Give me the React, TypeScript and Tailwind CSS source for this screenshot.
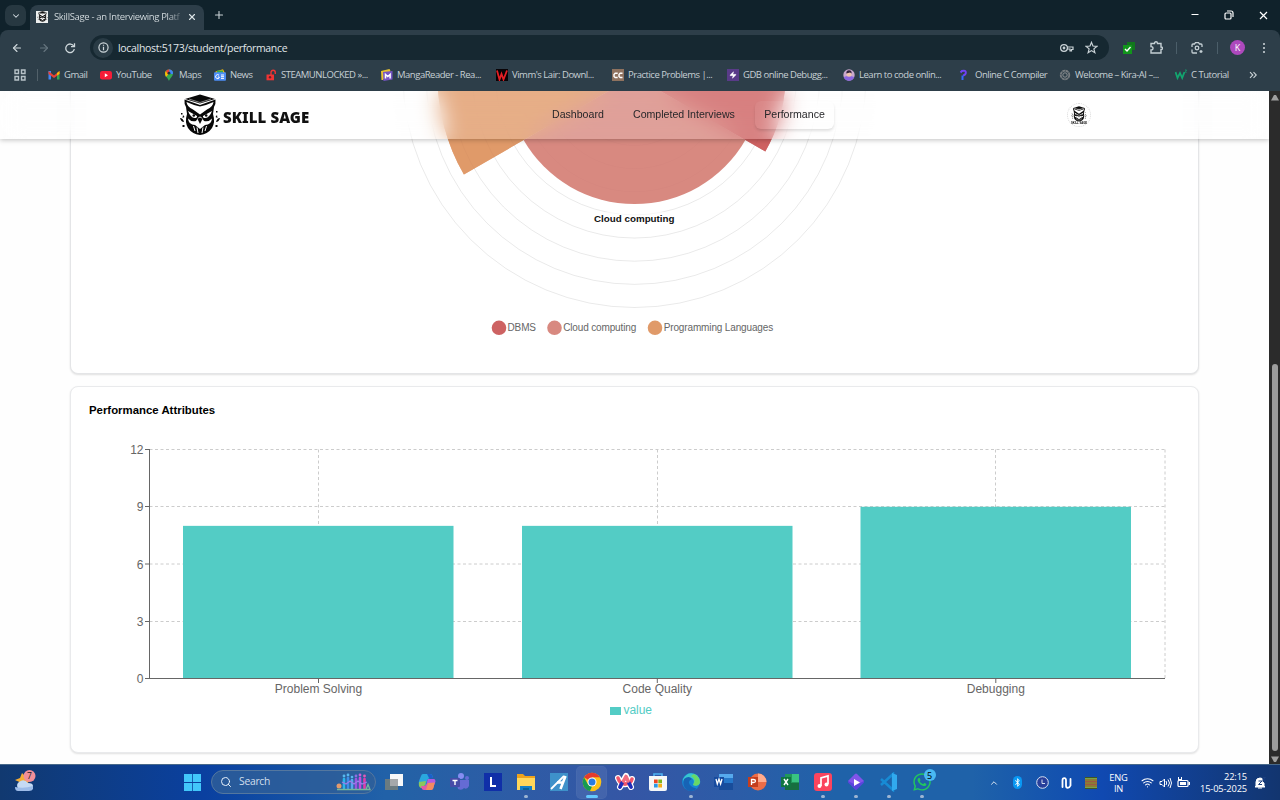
import React from "react";
import { FaWhatsapp, FaBluetoothB } from "react-icons/fa";
import { ArrowLeft, ArrowRight, ChevronDown, ChevronUp, X, Plus, Search, Wifi, Zap } from "lucide-react";

const Owl = ({ className }: { className: string }) => (
  <svg viewBox="0 0 40 42" className={className} fill="#080808">
    <path d="M5 5 20 .5 35 5 20 9.5Z" />
    <path d="M4.500 5.500 Q4 10 6 13 L7 20 Q4.500 28 8 34 Q12 40 20 41 Q28 40 32 34 Q35.500 28 33 20 L34 13 Q36 10 35.500 5.500 L20 11Z" />
    <path d="M6.500 8 Q13 11 20 12.500 Q27 11 33.500 8 Q33 13 27 15.500 L20 20.500 13 15.500 Q7 13 6.500 8Z" fill="#fff" />
    <path d="M8 17 17 22 Q17.500 24 14.500 24 Q10.500 23.500 8 17Z M32 17 23 22 Q22.500 24 25.500 24 Q29.500 23.500 32 17Z" fill="#fff" />
    <circle cx="13.800" cy="21.500" r="1.300" />
    <circle cx="26.200" cy="21.500" r="1.300" />
    <path d="M8 24.500 Q11 28 16 27 L18 24 Q20 21 22 24 L24 27 Q29 28 32 24.500 Q31.500 31 25 31 L20 35 15 31 Q8.500 31 8 24.500Z" fill="#fff" />
    <path d="M17.500 25 Q20 22 22.500 25 L20 30Z" />
    <path d="M13.500 32 15 37 M17 33.500 18 39 M23 33.500 22 39 M26.500 32 25 37" stroke="#fff" strokeWidth="1" />
    <path d="M9 5 20 8.500 31 5" stroke="#fff" strokeWidth=".5" fill="none" />
    <path d="M1 19h1.500v1.500H1z M0 24q3 0 4 4q-3 0-4-4z M2.500 31h2v2h-2z M3 21l1.500 2-2 1z M36 17h1.500v1.500H36z M40 24q-3 0-4 4q3 0 4-4z M35.500 31h2v2h-2z M37 21l-1.500 2 2 1z" />
  </svg>
);

const bookmarkText = "whitespace-nowrap text-[9.500px] leading-3 tracking-[-0.48px] text-[#c7d0d5]";
const slot = "flex shrink-0 items-center gap-1";
const fav = "size-3 shrink-0";

const Bookmarks = () => (
  <div className="flex h-[29px] items-center overflow-hidden pl-[14px]">
    <svg viewBox="0 0 12 12" className="mr-[16px] size-3 shrink-0" fill="none" stroke="#b7c2c8" strokeWidth="1.400">
      <path d="M1 1h3.500v3.500H1zM7.500 1H11v3.500H7.500zM1 7.500h3.500V11H1zM7.500 7.500H11V11H7.500z" />
    </svg>
    <div className="-ml-[5px] mr-[10px] h-3 w-px shrink-0 bg-[#52616a]" />
    <div className={`${slot} w-[52px]`}>
      <svg viewBox="0 0 12 12" className={fav}><path d="M.5 2h2.500v8.500H.5z" fill="#4285f4" /><path d="M9 4h2.500v6.500H9z" fill="#34a853" /><path d="M.5 2 6 6.500 11.500 2v3L6 9 .5 5z" fill="#ea4335" /><path d="M9 4l2.500-2v3L9 6.500z" fill="#fbbc04" /></svg>
      <span className={bookmarkText}>Gmail</span>
    </div>
    <div className={`${slot} w-[63px]`}>
      <svg viewBox="0 0 12 12" className={fav}><rect y="2" width="12" height="8.500" rx="2.200" fill="#f61c38" /><path d="M4.800 4.300v4L8 6.300z" fill="#fff" /></svg>
      <span className={bookmarkText}>YouTube</span>
    </div>
    <div className={`${slot} w-[51px]`}>
      <svg viewBox="0 0 12 12" className={fav}><path d="M6 12C5 9 2 7.500 2 4.300 2 2 3.800.4 6 .4s4 1.600 4 3.900C10 7.500 7 9 6 12z" fill="#34a853" /><path d="M2.800 2 6 4.500 3 8C2 6 1.500 4 2.800 2z" fill="#fbbc04" /><path d="M2.700 2.100C4 0 7 0 8.500 1.200L5 5.500z" fill="#ea4335" /><path d="M6 .4c3 0 4.500 2.200 3.900 4.600L7 5z" fill="#4285f4" /><circle cx="6" cy="4.200" r="1.400" fill="#20343d" /></svg>
      <span className={bookmarkText}>Maps</span>
    </div>
    <div className={`${slot} w-[51px]`}>
      <svg viewBox="0 0 12 12" className={fav}><path d="M1.500 2.500 9 .3l2.500 5H1.500z" fill="#fbbc04" /><path d="M3 1.500h6V5H3z" fill="#34a853" /><rect y="3.300" width="12" height="8.500" rx="1" fill="#4c8df6" /><path d="M5 6.200a2 2 0 1 0 .3 2.500V8H3.800M7 6h3M7 7.700h3M7 9.400h3" stroke="#fff" fill="none" /></svg>
      <span className={bookmarkText}>News</span>
    </div>
    <div className={`${slot} w-[116px]`}>
      <svg viewBox="0 0 12 12" className={fav}><path d="M1.500 5.500h7.500v5.800H1.500z" fill="#ef3434" /><path d="M6 6V3.500c0-3 4.300-3 4.300 0V5" fill="none" stroke="#ef3434" strokeWidth="1.400" /><circle cx="5" cy="8.300" r="1.200" fill="#66222a" /></svg>
      <span className={bookmarkText}>STEAMUNLOCKED »...</span>
    </div>
    <div className={`${slot} w-[115px]`}>
      <svg viewBox="0 0 12 12" className={fav}><path d="M0 2 8.500 0l1 2L2 11H.5z" fill="#e8c332" /><path d="M2 3 11.500 2v8.500L2.500 12z" fill="#7654c4" /><path d="M4.500 9.500V5.500l2.300 2 2.300-2V9.500" fill="none" stroke="#fff" strokeWidth="1.500" /></svg>
      <span className={bookmarkText}>MangaReader - Rea...</span>
    </div>
    <div className={`${slot} w-[116px]`}>
      <svg viewBox="0 0 12 12" className={fav}><path d="M0 0h12v12H0z" fill="#090306" /><path d="m1 1.500 2.500 9L5.500 5l2 5.500L11 1.500" fill="none" stroke="#e31e24" strokeWidth="1.800" /></svg>
      <span className={bookmarkText}>Vimm's Lair: Downl...</span>
    </div>
    <div className={`${slot} w-[115px]`}>
      <svg viewBox="0 0 12 12" className={fav}><path d="M0 0h12v12H0z" fill="#8f725f" /><path d="M5.700 4.300H3.200L2 5.500v2l1.200 1h2.500M10.500 4.300H8.200L7 5.500v2l1.200 1h2.300" fill="none" stroke="#fff" strokeWidth="1.400" /></svg>
      <span className={bookmarkText}>Practice Problems |...</span>
    </div>
    <div className={`${slot} w-[116px]`}>
      <span className="flex size-3 shrink-0 items-center justify-center bg-[#593b88]"><Zap size={8} fill="#fff" color="#fff" strokeWidth={1} /></span>
      <span className={bookmarkText}>GDB online Debugg...</span>
    </div>
    <div className={`${slot} w-[116px]`}>
      <svg viewBox="0 0 12 12" className={fav}><circle cx="6" cy="6" r="5.700" fill="#c9a8cc" /><path d="M.8 8q5-2 10.400 0-1 3.700-5.200 3.700T.8 8z" fill="#8a65e0" /><circle cx="6" cy="5.300" r="2.500" fill="#efc2ad" /><path d="M3.300 4.500Q3.300 1.300 6 1.300t2.700 3.200L7 3.500z" fill="#33233c" /></svg>
      <span className={bookmarkText}>Learn to code onlin...</span>
    </div>
    <div className={`${slot} w-[100px]`}>
      <svg viewBox="0 0 12 12" className={fav}><path d="M1.500 3.500 3 2q4-1 3.800 1.800Q6.500 6 4 6.500" fill="none" stroke="#7142f5" strokeWidth="2" /><path d="M2.500 6.500h2V11h-2z" fill="#3469ff" /></svg>
      <span className={bookmarkText}>Online C Compiler</span>
    </div>
    <div className={`${slot} w-[116px]`}>
      <svg viewBox="0 0 12 12" className={fav}><circle cx="6" cy="6" r="4.300" fill="none" stroke="#777c80" strokeWidth="1.800" strokeDasharray="3 .4" /><circle cx="6" cy="6" r="2.200" fill="none" stroke="#8d9194" /></svg>
      <span className={bookmarkText}>Welcome – Kira-AI –...</span>
    </div>
    <div className={`${slot} w-[74px]`}>
      <svg viewBox="0 0 12 12" className={fav}><path d="m.5 3 2 6L5 4l2.200 5L9.500 3" fill="none" stroke="#12a66f" strokeWidth="1.800" /><path d="M10 1h1.500L10.500 3l1 1" fill="none" stroke="#12a66f" strokeWidth=".8" /></svg>
      <span className={bookmarkText}>C Tutorial</span>
    </div>
    <svg viewBox="0 0 8 8" className="size-2 shrink-0" fill="none" stroke="#cbd3d7" strokeWidth="1.100"><path d="m1 1.200 2.800 2.800L1 6.800M4.500 1.200l2.800 2.800-2.800 2.800" /></svg>
  </div>
);

const Browser = () => (
  <div className="h-[91px] shrink-0 bg-[#10222b] font-['Open_Sans','Noto_Sans',sans-serif]">
    <div className="flex h-[30px] items-end">
      <div className="mb-1 ml-[5px] flex size-[21px] items-center justify-center rounded-[7px] bg-[#273841]">
        <ChevronDown size={10} strokeWidth={2.500} color="#d4dde1" />
      </div>
      <div className="ml-[4px] flex h-[25px] w-[174px] items-center rounded-t-[8px] bg-[#2d3e49] pb-[2px] pl-[6px]">
        <div className="flex size-3 items-center justify-center bg-[#eef0ef]"><Owl className="size-[11px]" /></div>
        <div className="ml-[6px] w-[127px] whitespace-nowrap bg-linear-to-r from-[#dce3e6] from-90% to-[#dce3e6]/20 bg-clip-text text-[9.500px] leading-4 tracking-[-0.34px] text-transparent">SkillSage - an Interviewing Platf</div>
        <X size={10} strokeWidth={2.700} color="#dce3e6" className="ml-[6px]" />
      </div>
      <Plus size={12} strokeWidth={2.200} color="#c9d2d6" className="mb-[9px] ml-[9px]" />
      <div className="mb-[10px] ml-auto mr-[12px] flex items-center">
        <svg viewBox="0 0 8 8" className="mr-[25px] size-2"><path d="M.5 3.500h7" stroke="#fff" /></svg>
        <svg viewBox="0 0 10 10" className="mr-[25px] size-[10px]" fill="none" stroke="#fff" strokeWidth="1.200"><rect x="1" y="3" width="6" height="6" rx="1" /><path d="M3 1h4q2 0 2 2v4" /></svg>
        <svg viewBox="0 0 9 9" className="size-[9px]" stroke="#fff" strokeWidth="1.200"><path d="m1 1 7 7M8 1 1 8" /></svg>
      </div>
    </div>
    <div className="h-[61px] rounded-t-[8px] bg-[#2d3e49]">
      <div className="flex h-[30px] items-end">
        <div className="flex h-[25px] w-[90px] items-center pl-[11px]">
          <ArrowLeft size={12} strokeWidth={2.200} color="#cfd8dc" />
          <ArrowRight size={12} strokeWidth={2.200} color="#65757f" className="ml-[15px]" />
          <svg viewBox="0 0 12 12" className="ml-[14px] size-3" fill="none" stroke="#cfd8dc" strokeWidth="1.300"><path d="M9.800 4.200A4.300 4.300 0 1 0 10.300 7" /><path d="M10.500 1.200v3.500H7" /></svg>
        </div>
        <div className="flex h-[25px] w-[1019px] items-center rounded-full bg-[#162831] pl-[3px]">
          <div className="flex size-[20px] items-center justify-center rounded-full bg-[#293b45]">
            <svg viewBox="0 0 12 12" className="size-[11px]" fill="none" stroke="#cfd8dc" strokeWidth="1.300"><circle cx="6" cy="6" r="5" /><path d="M6 5.300V9M6 2.900v1.300" /></svg>
          </div>
          <span className="ml-[5px] text-[10.500px] leading-5 tracking-[-0.31px] text-[#e0e6e9]">localhost:5173/student/performance</span>
          <svg viewBox="0 0 14 10" className="ml-auto h-[10px] w-[14px]" fill="none" stroke="#cbd4d8" strokeWidth="1.200"><circle cx="4" cy="5" r="3.400" /><circle cx="4" cy="5" r=".8" /><path d="M7 4h6v2.500h-1.500v1.300H10V6H7" /></svg>
          <svg viewBox="0 0 24 24" className="ml-[11px] mr-[11px] size-[13px]" fill="none" stroke="#cbd4d8" strokeWidth="2.200"><path d="m12 2.500 2.700 6.800 7.300.5-5.600 4.700 1.800 7.100L12 17.700l-6.200 3.900 1.800-7.100L2 9.800l7.300-.5z" /></svg>
        </div>
        <div className="flex h-[25px] items-center">
          <svg viewBox="0 0 12 12" className="ml-[14px] size-3"><path d="M4 0h8v8H4z" fill="#11771c" /><path d="M0 3h9v9H0z" fill="#12961c" /><path d="m2 7 2 2 3.500-4" fill="none" stroke="#fff" strokeWidth="1.400" /></svg>
          <svg viewBox="0 0 13 13" className="ml-[15px] size-[13px]" fill="none" stroke="#c4cfd4" strokeWidth="1.400"><path d="M1 2.500h3.500Q4.500.8 6 .8t1.500 1.700H11V6q1.500 0 1.500 1.300T11 8.500V12H1V9q2 0 2-1.700T1 5.600z" /></svg>
          <div className="ml-[13px] h-3 w-px bg-[#4b5e69]" />
          <svg viewBox="0 0 12 12" className="ml-[14px] size-3" fill="none" stroke="#c4cfd4" strokeWidth="1.300"><path d="M1 5V3q0-1 1-1h1.500l1-1.300h3L8.500 2H10q1 0 1 1v2M1 7.500V10q0 1 1 1h4M10 8v3M8.500 9.500h3" /><circle cx="6" cy="6" r="1.800" /></svg>
          <div className="ml-[14px] h-3 w-px bg-[#4b5e69]" />
          <div className="ml-[12px] flex size-[15px] items-center justify-center rounded-full bg-[#ad49bd] text-[9px] leading-none text-white">K</div>
          <svg viewBox="0 0 4 12" className="ml-[17px] h-3 w-1" fill="#d2dade"><circle cx="2" cy="2" r="1" /><circle cx="2" cy="6" r="1" /><circle cx="2" cy="10" r="1" /></svg>
        </div>
      </div>
      <Bookmarks />
    </div>
  </div>
);

const rings = [1, 2, 3, 4, 5, 6, 7, 8, 9, 10];

const PolarChart = () => (
  <svg viewBox="71 91 1127 282" className="block h-[282px] w-[1127px]">
    <path d="M634.500 76V-121A197 197 0 0 0 463.900 174.500Z" fill="#e09a69" />
    <path d="M634.500 76V-75A151 151 0 0 1 765.300 151.500Z" fill="#cd6262" />
    <path d="M634.500 76 745.400 140A128 128 0 0 1 523.600 140Z" fill="#d88980" />
    <g fill="none" stroke="#000" strokeOpacity=".11" strokeWidth=".8">
      {rings.slice(5).map((n) => <circle key={n} cx="634.500" cy="76" r={n * 23.15} />)}
    </g>
    <g fill="none" stroke="#000" strokeOpacity=".02" strokeWidth=".8">
      {rings.slice(0, 5).map((n) => <circle key={n} cx="634.500" cy="76" r={n * 23.15} />)}
    </g>
    <path d="M634.500 76V-121A197 197 0 0 0 463.900 174.500Z" fill="#e09a69" fillOpacity=".75" />
    <path d="M634.500 76V-75A151 151 0 0 1 765.300 151.500Z" fill="#cd6262" fillOpacity=".75" />
    <rect x="592" y="212" width="85" height="14" fill="#fff" fillOpacity=".6" />
    <text x="634.300" y="222.300" textAnchor="middle" fontSize="9.800" fontWeight="700" fill="#111">Cloud computing</text>
    <g fontSize="10" fill="#666">
      <circle cx="499" cy="327.800" r="7.300" fill="#cd6262" />
      <text x="507.500" y="331" textLength="28.500">DBMS</text>
      <circle cx="554.500" cy="327.800" r="7.300" fill="#d88980" />
      <text x="563.200" y="331" textLength="73">Cloud computing</text>
      <circle cx="655" cy="327.800" r="7.300" fill="#e09a69" />
      <text x="663.700" y="331" textLength="109.500">Programming Languages</text>
    </g>
  </svg>
);

const attributes = [
  { name: "Problem Solving", value: 8, x: 183, center: 318.5 },
  { name: "Code Quality", value: 8, x: 522, center: 657.3 },
  { name: "Debugging", value: 9, x: 860.5, center: 995.8 },
];
const base = 678.5;
const unit = 19.08;
const lineY = (v: number) => (v === 0 ? base : Math.floor(base - v * unit) + 0.5);

const BarChart = () => (
  <svg viewBox="71 430 1127 300" className="block h-[300px] w-[1127px]">
    <g stroke="#ccc" strokeDasharray="3 2.500" strokeWidth="1">
      {[12, 9, 6, 3].map((v) => <path key={v} d={`M149.500 ${v === 6 ? 564 : lineY(v)}H1165`} />)}
      {[318.5, 657.5, 995.5, 1165].map((x) => <path key={x} d={`M${x} 449.500V678`} />)}
    </g>
    {attributes.map((a) => (
      <rect key={a.name} x={a.x} y={base - a.value * unit} width="270.500" height={a.value * unit} fill="#53ccc5" />
    ))}
    <path d="M149.500 449V679M149.500 678.500H1165" stroke="#666" fill="none" />
    {[12, 9, 6, 3, 0].map((v) => (
      <g key={v}>
        <path d={`M145 ${v === 6 ? 564 : lineY(v)}H149.500`} stroke="#666" />
        <text x="143.500" y={base - v * unit + 4.5} textAnchor="end" fontSize="12" fill="#666">{v}</text>
      </g>
    ))}
    {attributes.map((a) => (
      <g key={a.name}>
        <path d={`M${a.center} 678V683`} stroke="#666" />
        <text x={a.center} y="693.200" textAnchor="middle" fontSize="12" fill="#666">{a.name}</text>
      </g>
    ))}
    <rect x="610" y="707" width="11" height="8" fill="#53ccc5" />
    <text x="623.500" y="714.300" fontSize="12" textLength="28.500" fill="#53ccc5">value</text>
  </svg>
);

const Page = () => (
  <div className="flex h-[673px] shrink-0 bg-[#fefefe] font-['Liberation_Sans',Arial,sans-serif]">
    <div className="relative h-full w-[1269px] overflow-hidden pl-[70px]">
      <section className="h-[283px] w-[1129px] rounded-b-[8px] border border-t-0 border-[#e4e5e7] bg-white shadow-[0_1px_2px_rgba(0,0,0,0.12)]">
        <PolarChart />
      </section>
      <section className="mt-[12px] h-[367px] w-[1129px] rounded-[8px] border border-[#e9eaec] bg-white shadow-[0_1px_2px_rgba(0,0,0,0.12)]">
        <h2 className="h-[43px] pl-[18px] pt-[15px] text-[11.400px] font-bold leading-4 text-black">Performance Attributes</h2>
        <BarChart />
      </section>
      <header className="absolute inset-x-0 top-0 flex h-12 items-center bg-white/20 text-[10.600px] text-[#27272a] shadow-[0_1px_5px_rgba(0,0,0,0.25)] backdrop-blur-[11px]">
        <Owl className="ml-[180px] h-[42px] w-10" />
        <span className="ml-[3px] mt-[4px] w-[87px] whitespace-nowrap font-['Noto_Sans','Open_Sans',sans-serif] text-[15px] font-black leading-5 tracking-[0.08px] text-[#111]">SKILL SAGE</span>
        <nav className="ml-[242px] flex items-center">
          <a className="w-[81px] whitespace-nowrap">Dashboard</a>
          <a className="w-[122px] whitespace-nowrap">Completed Interviews</a>
          <a className="flex h-7 w-[79px] items-center justify-center rounded-md bg-white/5 shadow-[0_2px_3px_rgba(0,0,0,0.12)]">Performance</a>
        </nav>
        <div className="ml-[233px] flex size-6 flex-col items-center justify-center rounded-full border border-dotted border-[#dadada] bg-white">
          <Owl className="size-4" />
          <span className="text-[2.700px] font-bold leading-[3px] text-black">SKILL SAGE</span>
        </div>
      </header>
    </div>
    <div className="flex w-[11px] flex-col items-center bg-[#2b2b2b]">
      <svg viewBox="0 0 8 6" className="mt-[4px] h-[6px] w-2" fill="#9f9f9f"><path d="M3 0h2l3 5.500H0z" /></svg>
      <div className="mt-[263px] h-[387px] w-[6px] rounded-full bg-[#9d9d9d]" />
      <svg viewBox="0 0 8 6" className="mt-[5px] h-[6px] w-2" fill="#9f9f9f"><path d="M0 .5h8L5 6H3z" /></svg>
    </div>
  </div>
);

const art = "size-5";
const apps: { art: React.ReactNode; run?: boolean; active?: boolean }[] = [
  { art: <svg viewBox="0 0 20 20" className={art}><path d="M6 2h13v12H6z" fill="#f7f8f9" /><path d="M1 7h13v11H1z" fill="#6b7b80" /><path d="M6 7h8v7H6z" fill="#a5a8aa" /></svg> },
  { art: <svg viewBox="0 0 20 20" className={art}><path d="M6 2h7q2 0 2.500 2l.5 2h-3q-2 0-3 3l-1 4H4q-3 0-2-4l2-5q.5-2 2-2z" fill="#2aa8de" /><path d="M2 10l7-1-1 4q-1 3-3 3-4 0-3-6z" fill="#8bc75c" /><path d="M14 18H7q-2 0-2.500-2L4 14h3q2 0 3-3l1-4h5q3 0 2 4l-2 5q-.5 2-2 2z" fill="#e05aa8" /><path d="M18 9l-7 2-2 7h5q2 0 2.500-2z" fill="#f28a61" /><path d="M11 7h5q3 0 2.200 3.500L10 11z" fill="#b05be0" /><path d="M10 2h3q2 0 2.500 2l.5 2h-4z" fill="#1c5fc9" /></svg> },
  { art: <svg viewBox="0 0 20 20" className={art}><circle cx="11" cy="4" r="3" fill="#858df2" /><circle cx="17" cy="6" r="2" fill="#656cd7" /><path d="M6 8h13v6q-2 4-5 2-2 3-6 1z" fill="#656bd4" /><rect y="6" width="10" height="9" rx="1" fill="#474ca8" /><path d="M2.500 8.500h5M5 8.500V13" stroke="#fff" strokeWidth="1.400" /></svg> },
  { art: <svg viewBox="0 0 20 20" className={art}><path d="M1 1h18v18H1z" fill="#102fa8" /><path d="M8 5v9h5" fill="none" stroke="#fff" strokeWidth="2" /></svg> },
  { run: true, art: <svg viewBox="0 0 20 20" className={art}><path d="M1 2h6l2 2h10v13H1z" fill="#eea31c" /><path d="M1 6h18v12H1z" fill="#ffd75b" /><path d="M4 14h12v4H4z" fill="#1180c8" /><path d="M7 16h6v2H7z" fill="#0a6298" /></svg> },
  { art: <svg viewBox="0 0 20 20" className={art}><path d="M1 1h18v18H1z" fill="#3e91ca" /><path d="m2 17 13-13" stroke="#fff" strokeWidth="1.800" /><path d="M8 10.500h6M11.500 17 16.500 4" stroke="#fff" strokeWidth="2.600" fill="none" /></svg> },
  { active: true, art: <svg viewBox="0 0 20 20" className={art}><circle cx="10" cy="10" r="9.300" fill="#fbc116" /><path d="M10 10 2 5.300A9.300 9.300 0 0 1 18 5.300H10z" fill="#e33b2e" /><path d="M2 5.300 6 12.500l4 2-2 4.600A9.300 9.300 0 0 1 2 5.300z" fill="#159b52" /><circle cx="10" cy="10" r="4.500" fill="#fff" /><circle cx="10" cy="10" r="3.500" fill="#287ce1" /></svg> },
  { art: <svg viewBox="0 0 20 20" className={art} fill="none" strokeLinecap="round" strokeLinejoin="round"><path d="M5 15 11 4l5 11M3 6q3 7 8 6 5 0 6-5" stroke="#fff" strokeWidth="6" /><path d="M3 6q2 6 7 6" stroke="#f0566b" strokeWidth="3.600" /><path d="M10 12q6 0 7-5" stroke="#f0566b" strokeWidth="3.600" /><path d="m5 15 2-4M16 15l-2-4" stroke="#1d2cb8" strokeWidth="3.800" /><path d="m8.500 9 2.500-4.500L13 9" stroke="#f26d80" strokeWidth="3.600" /></svg> },
  { art: <svg viewBox="0 0 20 20" className={art}><path d="M6 5V2h8v3" fill="none" stroke="#4fb3f2" strokeWidth="1.600" /><path d="M1 4h18v13q0 2-2 2H3q-2 0-2-2z" fill="#f5f7f8" /><path d="M6 7.500h3.700v3.700H6z" fill="#ef4823" /><path d="M10.300 7.500H14v3.700h-3.700z" fill="#7ab51d" /><path d="M6 11.800h3.700v3.700H6z" fill="#279be8" /><path d="M10.300 11.800H14v3.700h-3.700z" fill="#f6ad14" /></svg> },
  { run: true, art: <svg viewBox="0 0 20 20" className={art}><circle cx="10" cy="10" r="9" fill="#1686d3" /><path d="M2 7Q7-2 16 3q4 4 3 8-2 4-7 2 3-7-4-7-5 0-6 4z" fill="#38c6cf" /><path d="M13 2q6 3 6 9-2 4-7 2 4-6-2-9z" fill="#69d866" /><path d="M3 7q5-4 8 0-5 2-2 6 3 4 7 3-4 5-10 2-5-4-3-11z" fill="#1763b5" /></svg> },
  { art: <svg viewBox="0 0 20 20" className={art}><path d="M5 2h14v16H5z" fill="#2577ca" /><path d="M5 2h14v4H5z" fill="#56a9ed" /><path d="M5 11h14v7H5z" fill="#184d9b" /><path d="M0 5h10v10H0z" fill="#174b9f" /><path d="m2 7 1.300 5L5 7l1.600 5L8 7" fill="none" stroke="#fff" strokeWidth="1.300" /></svg> },
  { art: <svg viewBox="0 0 20 20" className={art}><circle cx="11" cy="10" r="8.500" fill="#ed6c47" /><path d="M11 1.500a8.500 8.500 0 0 1 8.500 8.500H11z" fill="#ffab8d" /><path d="M1 5h10v10H1z" fill="#c43e1f" /><path d="M4.500 13V7.500h2q2 0 2 1.500t-2 1.500h-2" fill="none" stroke="#fff" strokeWidth="1.300" /></svg> },
  { art: <svg viewBox="0 0 20 20" className={art}><path d="M5 2h14v16H5z" fill="#219859" /><path d="M12 2h7v8h-7z" fill="#39c481" /><path d="M5 11h14v7H5z" fill="#176f3f" /><path d="M1 5h10v10H1z" fill="#107641" /><path d="m4 7 4 6M8 7l-4 6" stroke="#fff" strokeWidth="1.400" /></svg> },
  { run: true, art: <svg viewBox="0 0 20 20" className={art}><rect x="1" y="1" width="18" height="18" rx="3" fill="#fb445e" /><path d="M8 14V6l7-2v8" fill="none" stroke="#fff" strokeWidth="1.700" /><circle cx="6.500" cy="14" r="2" fill="#fff" /><circle cx="13.500" cy="12.500" r="2" fill="#fff" /></svg> },
  { run: true, art: <svg viewBox="0 0 20 20" className={art}><rect x="4" y="4" width="12" height="12" rx="1" transform="rotate(45 10 10)" fill="#5a45dc" /><path d="M2 9 9 2q1-1 2 0l7 7-8 4z" fill="#8054e9" /><path d="m8 7 6 3.500L8 14z" fill="#fff" /></svg> },
  { run: true, art: <svg viewBox="0 0 20 20" className={art}><path d="m2 7 12 11V2L2 13" fill="none" stroke="#178bd5" strokeWidth="2.500" /><path d="m13 1 5 2v14l-5 2z" fill="#31a9ee" /></svg> },
  { run: true, art: <><FaWhatsapp size={20} color="#22c75e" /><span className="absolute -right-[4px] -top-[3px] flex size-[12px] items-center justify-center rounded-full bg-[#49b9f3] text-[9px] leading-none text-black">5</span></> },
];

const Taskbar = () => (
  <footer className="flex h-9 shrink-0 items-center border-t border-[#48698a] bg-linear-to-r from-[#113970] from-0% via-[#0a40a0] via-16% to-[#2161a8] to-30% font-['Open_Sans','Noto_Sans',sans-serif] text-white">
    <div className="flex h-full w-[390px] shrink-0 items-center">
      <svg viewBox="0 0 22 24" className="mb-[4px] ml-[14px] h-6 w-[22px]"><path d="m1 11 5-2 2-5 4 4 5 2-5 6z" fill="#f5ad36" /><path d="M4 19a4 4 0 0 1 1-6q5-4 9 1 5 0 5 3t-3 3H5z" fill="#c5daf4" /><path d="M1 18q9 2 18-1v3q-1 2-4 2H4q-3 0-3-4z" fill="#9dbce9" /><circle cx="15.500" cy="7" r="6" fill="#f18f99" /><text x="13.100" y="10.200" fontSize="8.500" fill="#171b24">7</text></svg>
      <svg viewBox="0 0 18 18" className="ml-[148px] size-[17px]" fill="#42c7fa"><path d="M0 0h8.600v8.600H0zM9.400 0H18v8.600H9.400zM0 9.400h8.600V18H0zM9.400 9.400H18V18H9.400z" /></svg>
      <div className="mb-px ml-[10px] flex h-6 w-[165px] items-center rounded-full border border-[#54779f] bg-[#305f99]/80 pl-[8px]">
        <Search size={12} color="#e8f2fc" />
        <span className="ml-[7px] text-[10.300px] tracking-[-0.25px] text-[#d2dfed]">Search</span>
        <svg viewBox="0 0 36 18" className="ml-auto mr-[3px] h-[18px] w-9"><g strokeWidth="2.600" strokeLinecap="round"><path d="M8 6v9" stroke="#2bb5eb" /><path d="M12 5v10" stroke="#3d8de8" /><path d="M16 7v8" stroke="#56a9ee" /><path d="M20 6v9" stroke="#9a55e0" /><path d="M24 5v10" stroke="#c44be0" /><path d="M28.500 6v9" stroke="#e03cad" /></g><path d="m6 9 4 2 4-3 4 3 4-3 4 3 5-2" fill="none" stroke="#9a7be8" strokeWidth="1.200" /><g fill="#58b8ee"><circle cx="8" cy="3" r="1.400" /><circle cx="12" cy="2" r="1.400" /><circle cx="16" cy="4" r="1.300" /><circle cx="20" cy="3" r="1.400" fill="#8f6de0" /><circle cx="24" cy="2" r="1.400" fill="#cb60de" /><circle cx="28.500" cy="3" r="1.400" fill="#e05bb8" /></g><circle cx="3" cy="13" r="2.500" fill="#e39a6d" /><path d="M1 16.500h33l-2-5-2 5" fill="none" stroke="#76b79c" strokeWidth="1.300" /></svg>
      </div>
    </div>
    <div className="flex h-full flex-1 items-center bg-linear-to-r from-[#2262a6] from-0% via-[#3556a5] via-27% to-[#1f62a9] to-50%">
      <div className="-ml-[13px] flex h-full items-center">
        {apps.map((app, i) => (
          <div key={i} className="flex h-full w-[33px] shrink-0 items-center justify-center">
            <div className={`relative flex h-[31px] w-[29px] items-center justify-center pb-px ${app.active ? "rounded bg-white/8 ring-1 ring-white/10" : ""}`}>
              <div className="relative shrink-0">{app.art}</div>
              {(app.run || app.active) && <div className={`absolute bottom-0 h-[3px] rounded-full ${app.active ? "w-3 bg-[#63caff]" : "w-1 bg-[#9db5d3]"}`} />}
            </div>
          </div>
        ))}
      </div>
      <div className="flex h-full flex-1 items-center bg-linear-to-r from-[#1f62a9] from-10% via-[#1049b1] via-48% to-[#12356f] to-100% pl-[51px]">
        <ChevronUp size={10} className="w-[10px]" />
        <span className="ml-[14px] flex h-[13px] w-[9px] items-center justify-center rounded-full bg-[#0998f4]"><FaBluetoothB size={9} /></span>
        <svg viewBox="0 0 13 13" className="ml-[14px] size-[13px]" fill="none" stroke="#d8e0f1"><circle cx="6.500" cy="6.500" r="5.800" fill="#283f9b" /><path d="M6 3.500v4h3" /></svg>
        <svg viewBox="0 0 11 12" className="ml-[12px] h-3 w-[11px]" fill="none" stroke="#fff" strokeWidth="1.800" strokeLinecap="round"><path d="M1.500 10V3.500Q1.500 1.200 3.300 1.200T5 3.500v5q0 2.300 1.800 2.300t2.700-2.300V2" /></svg>
        <svg viewBox="0 0 12 12" className="ml-[13px] size-3"><path d="M0 0h12v12H0z" fill="#425523" /><path d="M0 3h12M0 6h12M0 9h12" stroke="#d7a148" /><path d="M0 1.500h12M0 10.500h12" stroke="#76a44c" /><path d="M0 4.500h12M0 7.500h12" stroke="#b55a4a" strokeWidth=".8" /></svg>
        <div className="ml-[12px] w-[19px] text-center text-[9.300px] leading-[11px] tracking-[-0.2px]">ENG<br />IN</div>
        <Wifi size={13} strokeWidth={2} className="ml-[13px]" />
        <svg viewBox="0 0 13 12" className="ml-[5px] h-3 w-[13px]" fill="none" stroke="#fff"><path d="M1 4.500h2L5.500 2v8L3 7.500H1zM7 4q1.500 2 0 4M9 2.500q3 3.500 0 7M11 1q3 5 0 10" /></svg>
        <svg viewBox="0 0 13 12" className="ml-[5px] h-3 w-[13px]"><rect x="1" y="3.500" width="10" height="6" rx="1" fill="none" stroke="#fff" strokeWidth="1.200" /><path d="M3 5h6v3H3zM11.500 5h1.500v3h-1.500zM1 0h1v2h2V0h1v4H1z" fill="#fff" /></svg>
        <div className="ml-[7px] w-[50px] text-right text-[9.300px] leading-[12px] tracking-[-0.15px]">22:15<br /><span className="whitespace-nowrap">15-05-2025</span></div>
        <svg viewBox="0 0 12 12" className="ml-[7px] size-3"><path d="M2 9V5q0-4 4-4l2 .5v3L10 6v3l1 1H1zM4 11h4" fill="#fff" stroke="#fff" /><path d="M4.500 4h3.500L4.500 7.500h3.500M9 .5h2.500L9 3.200h2.500" fill="none" stroke="#1b3f80" strokeWidth="1" /></svg>
      </div>
    </div>
  </footer>
);

export default function App() {
  return (
    <main className="flex h-[800px] w-[1280px] flex-col overflow-hidden">
      <Browser />
      <Page />
      <Taskbar />
    </main>
  );
}
